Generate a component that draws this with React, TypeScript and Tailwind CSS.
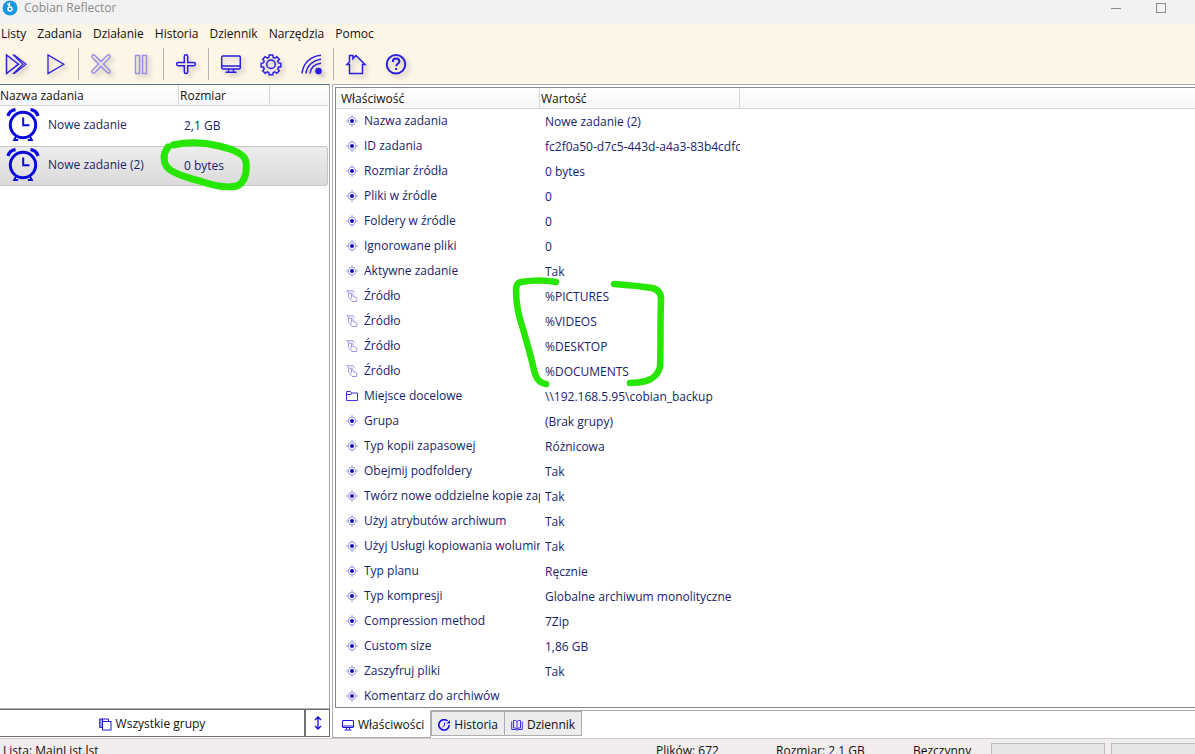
import { useState } from "react";
import type { ReactNode } from "react";

type IconName = "node" | "source" | "folder";

const menuItems = ["Listy", "Zadania", "Działanie", "Historia", "Dziennik", "Narzędzia", "Pomoc"];

const tasks = [
  { name: "Nowe zadanie", size: "2,1 GB" },
  { name: "Nowe zadanie (2)", size: "0 bytes" },
];

const properties: { icon: IconName; name: string; value: string }[] = [
  { icon: "node", name: "Nazwa zadania", value: "Nowe zadanie (2)" },
  { icon: "node", name: "ID zadania", value: "fc2f0a50-d7c5-443d-a4a3-83b4cdfc" },
  { icon: "node", name: "Rozmiar źródła", value: "0 bytes" },
  { icon: "node", name: "Pliki w źródle", value: "0" },
  { icon: "node", name: "Foldery w źródle", value: "0" },
  { icon: "node", name: "Ignorowane pliki", value: "0" },
  { icon: "node", name: "Aktywne zadanie", value: "Tak" },
  { icon: "source", name: "Źródło", value: "%PICTURES" },
  { icon: "source", name: "Źródło", value: "%VIDEOS" },
  { icon: "source", name: "Źródło", value: "%DESKTOP" },
  { icon: "source", name: "Źródło", value: "%DOCUMENTS" },
  { icon: "folder", name: "Miejsce docelowe", value: "\\\\192.168.5.95\\cobian_backup" },
  { icon: "node", name: "Grupa", value: "(Brak grupy)" },
  { icon: "node", name: "Typ kopii zapasowej", value: "Różnicowa" },
  { icon: "node", name: "Obejmij podfoldery", value: "Tak" },
  { icon: "node", name: "Twórz nowe oddzielne kopie zap", value: "Tak" },
  { icon: "node", name: "Użyj atrybutów archiwum", value: "Tak" },
  { icon: "node", name: "Użyj Usługi kopiowania wolumin", value: "Tak" },
  { icon: "node", name: "Typ planu", value: "Ręcznie" },
  { icon: "node", name: "Typ kompresji", value: "Globalne archiwum monolityczne" },
  { icon: "node", name: "Compression method", value: "7Zip" },
  { icon: "node", name: "Custom size", value: "1,86 GB" },
  { icon: "node", name: "Zaszyfruj pliki", value: "Tak" },
  { icon: "node", name: "Komentarz do archiwów", value: "" },
];

/* 24x24 toolbar drawings */
const toolIcons = {
  runAll: (
    <>
      <path d="M2.5 3v18.5L14.5 12.2z" />
      <path d="M9.5 3h1L22 12.2 10.5 21.5h-1L19 12.2z" strokeWidth="1.2" />
    </>
  ),
  run: <path d="M4 3v18.5L19.8 12.2z" strokeWidth="1.3" />,
  cancel: (
    <path d="M5.6 3.2 12 9.6l6.4-6.4a1.7 1.7 0 0 1 2.4 2.4L14.4 12l6.4 6.4a1.7 1.7 0 0 1-2.4 2.4L12 14.4l-6.4 6.4a1.7 1.7 0 0 1-2.4-2.4L9.6 12 3.2 5.6a1.7 1.7 0 0 1 2.4-2.4z" />
  ),
  pause: (
    <>
      <rect x="6.5" y="3.5" width="4" height="18" />
      <rect x="13.5" y="3.5" width="4" height="18" />
    </>
  ),
  add: (
    <path d="M10.3 4.2q0-1.4 1.7-1.4t1.7 1.4v6.3h6.1q1.6 0 1.6 1.6t-1.6 1.6h-6.1v6.2q0 1.5-1.7 1.5t-1.7-1.5v-6.2H4.2q-1.6 0-1.6-1.6t1.6-1.6h6.1z" />
  ),
  monitor: (
    <>
      <rect x="2.7" y="4" width="18.6" height="13" rx="1.2" />
      <path d="M2.7 14h18.6M9.5 17v3M14.5 17v3M6.5 20.3h11" />
    </>
  ),
  gear: (
    <>
      <circle cx="12" cy="12.3" r="4.3" />
      <path d="M10.2 3h3.6l.4 2.5 1.6.7 2.1-1.5 2.4 2.5-1.5 2 .7 1.7 2.4.4v3.5l-2.5.4-.6 1.6 1.5 2.1-2.5 2.4-2-1.4-1.6.6-.4 2.2h-3.6l-.4-2.2-1.6-.6-2 1.4-2.5-2.4 1.5-2.1-.6-1.6-2.5-.4v-3.5l2.4-.4.7-1.7-1.5-2 2.4-2.5 2.1 1.5 1.6-.7z" />
    </>
  ),
  signal: (
    <>
      <path d="M3 21.5C4 11.5 11 4.2 22 3.2M7 21.5c.8-7.500 6.500-13 15-14.200M11 21.5c.6-5.200 4.500-9.300 11-10.200" />
      <circle cx="19.5" cy="19" r="2.6" fill="currentColor" />
    </>
  ),
  home: (
    <path d="M5.5 21.5V12.5H3L5.500 10V3.500h3.400V6.600L12 3.500l9 9h-2.500v9z" />
  ),
  help: (
    <>
      <circle cx="12" cy="12.3" r="9.3" strokeWidth="2" />
      <path d="M8.800 10q0-3.400 3.300-3.400t3.300 2.900c0 2-3.300 2.400-3.300 4.700" strokeWidth="2" />
      <path d="M12.1 16v2" strokeWidth="2" />
    </>
  ),
};

function ToolButton({ label, disabled, children }: { label: string; disabled?: boolean; children: ReactNode }) {
  return (
    <button
      type="button"
      aria-label={label}
      disabled={disabled}
      className="flex h-8 w-8 items-center justify-center text-[#2a1ee0] disabled:text-[#9a8ee4]"
    >
      <svg
        viewBox="0 0 24 24"
        className="h-6 w-6 drop-shadow-[3px_3px_2px_rgba(0,0,0,0.2)]"
        fill="none"
        stroke="currentColor"
        strokeWidth="1.5"
      >
        {children}
      </svg>
    </button>
  );
}

function ToolSeparator() {
  return <div className="mx-1.5 h-8 w-px bg-[#b4b4b4]" />;
}

function RowIcon({ name }: { name: IconName }) {
  if (name === "folder") {
    return (
      <svg viewBox="0 0 12 12" className="h-3 w-3 shrink-0" fill="none" stroke="#3a30dc">
        <path d="M.5 10.5V1.5h4l1 1.5h6v7.5zM.5 4.5h4.500l1-1.500" />
      </svg>
    );
  }
  if (name === "source") {
    return (
      <svg viewBox="0 0 12 12" className="h-3 w-3 shrink-0" fill="none" stroke="#9a93ec">
        <path d="M.5.8h6.500l1.500 2M1 1l2 2M2.500 3.500V7.500M2.500 3.300h3.500" />
        <path d="M5.500 7.500V4.300q.8-1.300 1.600 0V6.500l2.900 1q1.200.5 1 1.700l-.5 2.300H6L3.500 8.600q.5-1.200 2-.3" />
      </svg>
    );
  }
  return (
    <svg viewBox="0 0 12 12" className="h-3 w-3 shrink-0" fill="none" stroke="#9d96f0">
      <path d="M6 0v2M6 10v2M0 6h2M10 6h2" />
      <circle cx="6" cy="6" r="3.8" />
      <circle cx="6" cy="6" r="2" fill="#1408c8" stroke="none" />
    </svg>
  );
}

function AlarmIcon() {
  return (
    <svg viewBox="0 0 34 34" className="h-[34px] w-[34px] shrink-0" fill="none" stroke="#0a08e0" strokeWidth="3">
      <circle cx="17" cy="17" r="12.7" />
      <path d="M17.2 9.5v7.700h6.300" strokeWidth="2" />
      <path d="M2 8q1.500-5.500 7.500-6.300M32 8q-1.500-5.500-7.500-6.300" strokeWidth="3.2" />
      <path d="M10 28.500l-1.800 3.500h4M24 28.500l1.800 3.500h-4" strokeWidth="2" />
    </svg>
  );
}

function MonitorIcon() {
  return (
    <svg viewBox="0 0 12 12" className="h-3 w-3" fill="none" stroke="#2013d4">
      <rect x=".5" y="1.5" width="11" height="7" rx=".5" />
      <path d="M.5 7h11M4.500 8.500v2M7.500 8.500v2M2.500 11h7" />
    </svg>
  );
}

function HistoryIcon() {
  return (
    <svg viewBox="0 0 12 12" className="h-3 w-3" fill="none" stroke="#1408e0">
      <path d="M9.500 2A5.200 5.200 0 1 0 11.200 6" strokeWidth="1.6" />
      <path d="M8.500 4.500H12V1z" fill="#1408e0" stroke="none" />
      <path d="M6.500 3.500v3L4.500 8" />
    </svg>
  );
}

function BookIcon() {
  return (
    <svg viewBox="0 0 12 12" className="h-3 w-3" fill="none" stroke="#3a30dc">
      <path d="M6 2.500q-1.500-1.500-3.500-1v7.500q2-.5 3.500 1 1.500-1.500 3.500-1V1.500q-2-.5-3.500 1zM6 2.500V10M.7 2.500v8H5l1 .8 1-.8h4.300v-8" />
    </svg>
  );
}

const tabs = [
  { label: "Właściwości", icon: <MonitorIcon /> },
  { label: "Historia", icon: <HistoryIcon /> },
  { label: "Dziennik", icon: <BookIcon /> },
];

export default function App() {
  const [selected, setSelected] = useState(1);
  const [activeTab, setActiveTab] = useState(0);

  return (
    <div className="flex h-screen w-full flex-col overflow-hidden bg-white font-['Open_Sans','Noto_Sans',sans-serif] text-xs text-[#111111]">
      <header className="flex h-6 shrink-0 items-start justify-between bg-[#f2f2f2] pl-0.5 pr-3">
        <div className="flex items-center gap-1.5">
          <svg viewBox="0 0 16 16" className="h-4 w-4">
            <circle cx="8" cy="8" r="7.5" fill="#1597e5" />
            <circle cx="8" cy="9" r="2" fill="none" stroke="#fff" strokeWidth="1.5" />
            <path d="M5.500 3.500 7.500 6.500M7.500 2.500v4" fill="none" stroke="#fff" strokeWidth="1.3" />
          </svg>
          <span className="text-[#8a8a8a]">Cobian Reflector</span>
        </div>
        <div className="flex text-[#8a8a8a]">
          <button type="button" aria-label="Minimalizuj" className="flex h-4 w-[45px] items-center justify-center">
            <svg viewBox="0 0 10 10" className="h-2.5 w-2.5" fill="none" stroke="currentColor">
              <path d="M0 5.500h10" />
            </svg>
          </button>
          <button type="button" aria-label="Maksymalizuj" className="flex h-4 w-[45px] items-center justify-center">
            <svg viewBox="0 0 10 10" className="h-2.5 w-2.5" fill="none" stroke="currentColor">
              <rect x=".5" y=".5" width="9" height="9" />
            </svg>
          </button>
        </div>
      </header>

      <nav className="flex h-5 shrink-0 items-center gap-[11px] bg-[#fdf5e6] pl-px">
        {menuItems.map((item) => (
          <button key={item} type="button">
            {item}
          </button>
        ))}
      </nav>

      <div className="flex h-10 shrink-0 items-center bg-[#fdf5e6] pb-px">
        <div className="flex gap-2">
          <ToolButton label="Uruchom wszystkie">{toolIcons.runAll}</ToolButton>
          <ToolButton label="Uruchom">{toolIcons.run}</ToolButton>
        </div>
        <ToolSeparator />
        <div className="flex gap-2">
          <ToolButton label="Przerwij" disabled>{toolIcons.cancel}</ToolButton>
          <ToolButton label="Wstrzymaj" disabled>{toolIcons.pause}</ToolButton>
        </div>
        <ToolSeparator />
        <ToolButton label="Nowe zadanie">{toolIcons.add}</ToolButton>
        <ToolSeparator />
        <div className="flex gap-2">
          <ToolButton label="Interfejs">{toolIcons.monitor}</ToolButton>
          <ToolButton label="Opcje">{toolIcons.gear}</ToolButton>
          <ToolButton label="Zdalne">{toolIcons.signal}</ToolButton>
        </div>
        <ToolSeparator />
        <div className="flex gap-2">
          <ToolButton label="Strona domowa">{toolIcons.home}</ToolButton>
          <ToolButton label="Pomoc">{toolIcons.help}</ToolButton>
        </div>
      </div>

      <main className="flex min-h-0 flex-1">
        {/* Task list */}
        <section className="flex w-[330px] shrink-0 flex-col pb-px">
          <div className="relative min-h-0 flex-1 overflow-hidden border-b border-r border-t border-b-[#a9b0bb] border-r-[#a0a0a0] border-t-[#5c7796] pr-px">
            <table className="w-full table-fixed border-separate border-spacing-0">
              <colgroup>
                <col className="w-[179px]" />
                <col className="w-[91px]" />
                <col />
              </colgroup>
              <thead>
                <tr className="h-[21px] bg-linear-to-b from-white to-[#f7f7fa] text-left">
                  <th className="border-b border-r border-[#d5d5d5] p-0 pt-0.5 font-normal">Nazwa zadania</th>
                  <th className="border-b border-r border-[#d5d5d5] p-0 pl-px pt-0.5 font-normal">Rozmiar</th>
                  <th className="border-b border-[#d5d5d5] p-0" />
                </tr>
              </thead>
              <tbody className="text-[#16246a]">
                {tasks.map((task, i) => (
                  <tr
                    key={task.name}
                    onClick={() => setSelected(i)}
                    aria-selected={selected === i}
                    className="group h-10 aria-selected:bg-linear-to-b aria-selected:from-[#eeeeee] aria-selected:to-[#dadada]"
                  >
                    <td className="border-y border-transparent p-0 pb-0.5 pl-1.5 group-aria-selected:border-[#c4c4c4]">
                      <div className="flex items-center gap-2">
                        <AlarmIcon />
                        {task.name}
                      </div>
                    </td>
                    <td className="border-y border-transparent p-0 pl-[5px] group-aria-selected:border-[#c4c4c4]">
                      {task.size}
                    </td>
                    <td className="rounded-r-sm border-y border-r border-transparent p-0 group-aria-selected:border-[#c4c4c4]" />
                  </tr>
                ))}
              </tbody>
            </table>
            {/* Marker ring round the empty size */}
            <svg
              viewBox="160 138 92 54"
              className="pointer-events-none absolute left-[160px] top-[53px] h-[54px] w-[92px]"
              fill="none"
              stroke="#27e600"
              strokeWidth="7"
              strokeLinecap="round"
              strokeLinejoin="round"
            >
              <path d="M168 147C163 154 163 161 167 167C172 173 184 177 200 181C214 186 228 188 237 186C245 182 247 172 246 162C245 154 232 149 219 146C203 142 187 142 173 145" />
            </svg>
          </div>
          <div className="flex h-7 shrink-0">
            <button
              type="button"
              className="flex flex-1 items-center justify-center gap-1 border-y border-r border-[#707070] pt-0.5"
            >
              <svg viewBox="0 0 13 13" className="h-[13px] w-[13px]" fill="none" stroke="#2013d4">
                <path d="M3.500 3.500V1H.7v8.500h2.500" fill="#a7a2f0" />
                <rect x="3.5" y="3.5" width="8.5" height="8.5" />
                <path d="M9.500 3.500V1H3" />
              </svg>
              Wszystkie grupy
            </button>
            <button
              type="button"
              aria-label="Rozwiń grupy"
              className="flex w-[25px] items-center justify-center border border-[#707070]"
            >
              <svg viewBox="0 0 8 14" className="h-3.5 w-2" fill="none" stroke="#1408e0" strokeWidth="1.3">
                <path d="M4 1v12M1 4l3-3 3 3M1 10l3 3 3-3" />
              </svg>
            </button>
          </div>
        </section>

        {/* Properties of the selected task */}
        <section className="ml-0.5 flex min-w-0 flex-1 flex-col">
          <div className="flex min-h-0 flex-1 border-b border-l border-t border-[#acacac] pb-0.5 pl-0.5 pt-0.5">
            <div className="relative min-h-0 flex-1 overflow-hidden border-b border-l border-t border-[#828790]">
              <table className="w-full table-fixed border-separate border-spacing-0">
                <colgroup>
                  <col className="w-[204px]" />
                  <col className="w-[200px]" />
                  <col />
                </colgroup>
                <thead>
                  <tr className="h-[21px] bg-linear-to-b from-white to-[#f7f7fa] text-left">
                    <th className="border-b border-r border-[#d5d5d5] p-0 pl-[5px] pt-0.5 font-normal">Właściwość</th>
                    <th className="border-b border-r border-[#d5d5d5] p-0 pl-px pt-0.5 font-normal">Wartość</th>
                    <th className="border-b border-[#d5d5d5] p-0" />
                  </tr>
                </thead>
                <tbody className="text-[#16246a]">
                  {properties.map((row, i) => (
                    <tr key={i} className="h-[25px]">
                      <td className="p-0 pb-0.5 pl-2.5">
                        <div className="flex items-center gap-1.5">
                          <RowIcon name={row.icon} />
                          <span className="overflow-hidden whitespace-nowrap">{row.name}</span>
                        </div>
                      </td>
                      <td className="p-0 pl-[5px]">
                        <div className="overflow-hidden whitespace-nowrap">{row.value}</div>
                      </td>
                      <td className="p-0" />
                    </tr>
                  ))}
                </tbody>
              </table>
              {/* Marker brackets round the source folders */}
              <svg
                viewBox="510 276 160 114"
                className="pointer-events-none absolute left-[174px] top-[188px] h-[114px] w-[160px]"
                fill="none"
                stroke="#27e600"
                strokeWidth="6.5"
                strokeLinecap="round"
                strokeLinejoin="round"
              >
                <path d="M556 282C545 280 533 280 521 282Q516 283 516 290C516 305 518 315 523 329C528 346 532 361 535 374Q538 383 546 384" />
                <path d="M614 284C628 285 640 286 652 288Q662 290 661 302C660 324 661 346 660 367Q657 378 646 381Q639 383 630 383" />
              </svg>
            </div>
          </div>
          <div role="tablist" className="flex h-[27px] shrink-0 items-start">
            {tabs.map((tab, i) => (
              <button
                key={tab.label}
                type="button"
                role="tab"
                aria-selected={activeTab === i}
                onClick={() => setActiveTab(i)}
                className="-mr-px flex h-[25px] items-center gap-1 border border-[#acacac] bg-[#ececec] px-1.5 pt-0.5 aria-selected:-mt-px aria-selected:mr-0 aria-selected:h-7 aria-selected:border-t-white aria-selected:bg-white aria-selected:pl-[9px]"
              >
                {tab.icon}
                {tab.label}
              </button>
            ))}
          </div>
        </section>
      </main>

      <footer className="flex h-4 shrink-0 items-start overflow-hidden border-t border-[#cccccc] bg-[#f0edec] pt-1 leading-4">
        <span className="flex-1 pl-[3px]">Lista: MainList.lst</span>
        <span className="w-[120px]">Plików: 672</span>
        <span className="w-[137px]">Rozmiar: 2,1 GB</span>
        <span className="w-[78px]">Bezczynny</span>
        <div className="h-4 w-[114px] border border-[#bcbcbc] bg-[#e6e6e6]" />
        <div className="ml-1.5 h-4 w-[84px] border border-r-0 border-[#bcbcbc] bg-[#e6e6e6]" />
      </footer>
    </div>
  );
}
